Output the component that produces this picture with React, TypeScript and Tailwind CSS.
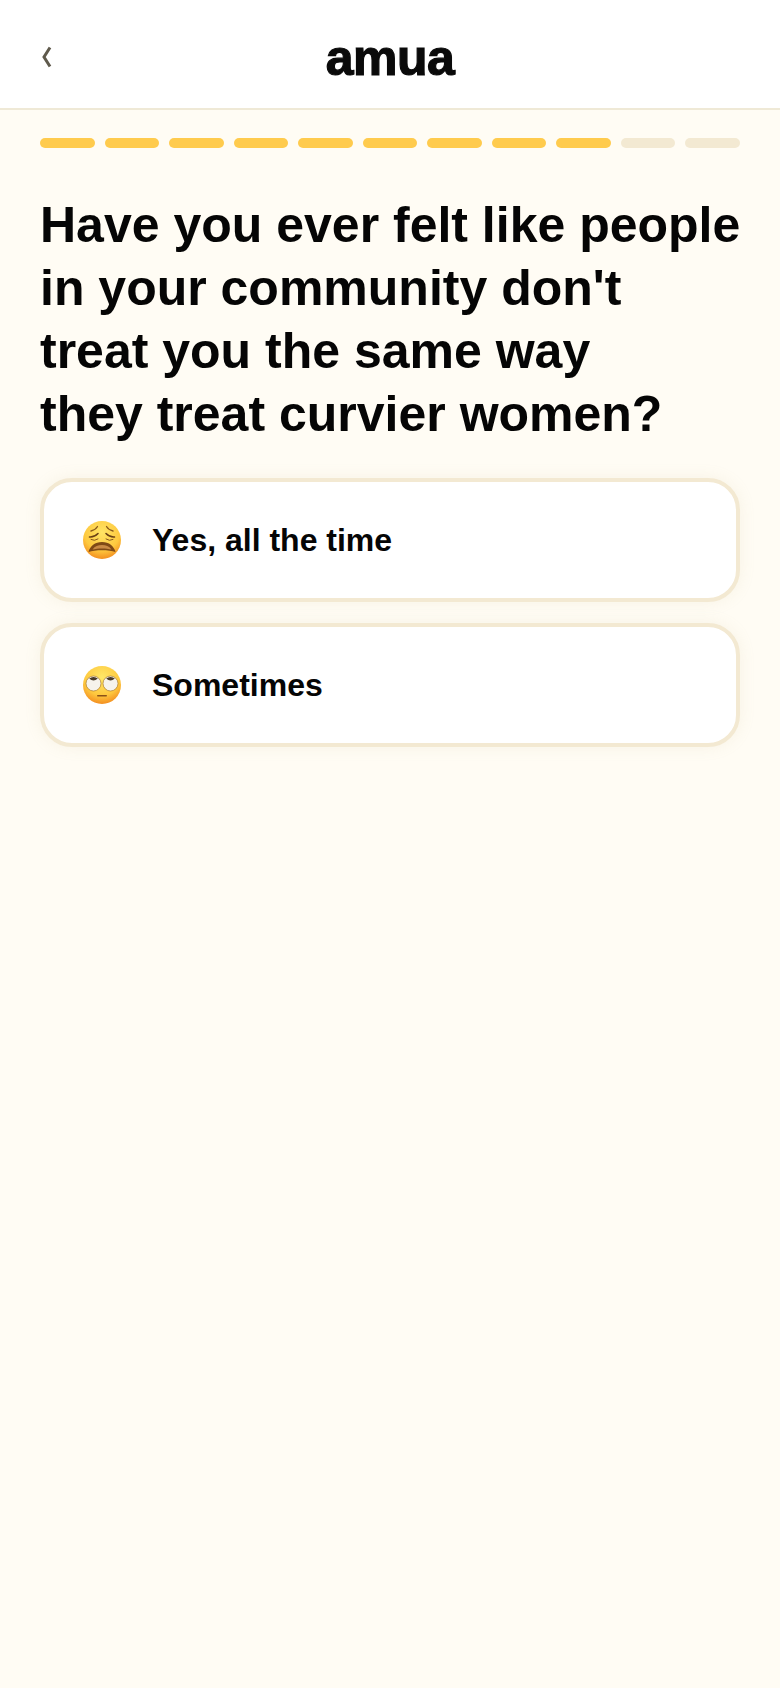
const steps = [1, 1, 1, 1, 1, 1, 1, 1, 1, 0, 0];

function WearyFace() {
  return (
    <svg width="40" height="40" viewBox="0 0 40 40">
      <defs>
        <radialGradient id="wearySkin" cx="50%" cy="30%" r="72%">
          <stop offset="0%" stopColor="#ffe465" />
          <stop offset="65%" stopColor="#fec93f" />
          <stop offset="100%" stopColor="#f28a1e" />
        </radialGradient>
      </defs>
      <circle cx="20" cy="20" r="19" fill="url(#wearySkin)" />
      <path d="M15.5 6.5 Q13.5 10 9 11" fill="none" stroke="#8a5a1c" strokeWidth="1.3" strokeLinecap="round" />
      <path d="M24.5 6.5 Q26.5 10 31 11" fill="none" stroke="#8a5a1c" strokeWidth="1.3" strokeLinecap="round" />
      <path d="M7.5 17 Q12 17.5 16 13.5" fill="none" stroke="#6a4014" strokeWidth="1.6" strokeLinecap="round" />
      <path d="M32.5 17 Q28 17.5 24 13.5" fill="none" stroke="#6a4014" strokeWidth="1.6" strokeLinecap="round" />
      <path d="M9 19.5 Q12.5 21.5 16 19" fill="none" stroke="#8a5a1c" strokeWidth="1" strokeLinecap="round" />
      <path d="M31 19.5 Q27.5 21.5 24 19" fill="none" stroke="#8a5a1c" strokeWidth="1" strokeLinecap="round" />
      <path d="M6.5 32 C8 26 13 22 20 22 C27 22 32 26 33.5 32 C27 29.5 13 29.5 6.5 32 Z" fill="#7f4a16" />
      <path d="M10.5 29.5 C13 26 16 25 20 25 C24 25 27 26 29.5 29.5 C24 28 16 28 10.5 29.5 Z" fill="#c98a45" />
    </svg>
  );
}

function EyeRollFace() {
  return (
    <svg width="40" height="40" viewBox="0 0 40 40">
      <defs>
        <radialGradient id="rollSkin" cx="50%" cy="30%" r="72%">
          <stop offset="0%" stopColor="#ffe768" />
          <stop offset="65%" stopColor="#fec93f" />
          <stop offset="100%" stopColor="#f28a1e" />
        </radialGradient>
      </defs>
      <circle cx="20" cy="20" r="19" fill="url(#rollSkin)" />
      <circle cx="11.5" cy="18.5" r="7.5" fill="#f6f3ec" stroke="#a97a2c" strokeWidth="0.7" />
      <circle cx="28.5" cy="18.5" r="7.5" fill="#f6f3ec" stroke="#a97a2c" strokeWidth="0.7" />
      <path d="M7.2 13.6 A6.6 6.6 0 0 1 15.8 13.6 Q11.5 17.4 7.2 13.6 Z" fill="#4a3a28" />
      <path d="M24.2 13.6 A6.6 6.6 0 0 1 32.8 13.6 Q28.5 17.4 24.2 13.6 Z" fill="#4a3a28" />
      <rect x="15" y="30" width="10" height="1.6" rx="0.8" fill="#8a5218" />
    </svg>
  );
}

function AnswerCard({ icon, label }: { icon: React.ReactNode; label: string }) {
  return (
    <button className="flex h-[124px] w-full items-center gap-[30px] rounded-[32px] border-4 border-[#f3e9d2] bg-white pl-[38px] text-left shadow-[0_0_16px_rgba(190,170,120,0.12)]">
      {icon}
      <span className="text-[32px] font-bold text-[#050505]">{label}</span>
    </button>
  );
}

export default function App() {
  return (
    <main className="flex min-h-[1688px] flex-col bg-[#fffcf4] font-['Liberation_Sans',Arial,sans-serif]">
      <header className="relative flex h-[110px] items-center justify-center border-b-2 border-[#efe9d6] bg-white">
        <button className="absolute left-[38px] top-[44px] text-[#5f5a4c]">
          <svg width="16" height="26" viewBox="0 0 16 26" fill="none">
            <path d="M12 3.5 L6 13 L12 22.5" stroke="currentColor" strokeWidth="3" />
          </svg>
        </button>
        <span className="mt-2 text-[50px] font-bold leading-none tracking-[-0.5px] text-[#0a0a0a] [-webkit-text-stroke:1.2px_#0a0a0a]">amua</span>
      </header>

      <section className="flex flex-col px-10 pt-7">
        <div className="flex gap-[10px]">
          {steps.map((on, i) => (
            <div key={i} className={on ? "h-[10px] flex-1 rounded-full bg-[#ffcb4d]" : "h-[10px] flex-1 rounded-full bg-[#f3e9d2]"} />
          ))}
        </div>

        <h1 className="mt-[46px] whitespace-nowrap text-[50px] font-bold leading-[63px] text-[#050505]">
          Have you ever felt like people
          <br />
          in your community don't
          <br />
          treat you the same way
          <br />
          they treat curvier women?
        </h1>

        <div className="mt-[32px] flex flex-col gap-[21px]">
          <AnswerCard icon={<WearyFace />} label="Yes, all the time" />
          <AnswerCard icon={<EyeRollFace />} label="Sometimes" />
        </div>
      </section>
    </main>
  );
}
